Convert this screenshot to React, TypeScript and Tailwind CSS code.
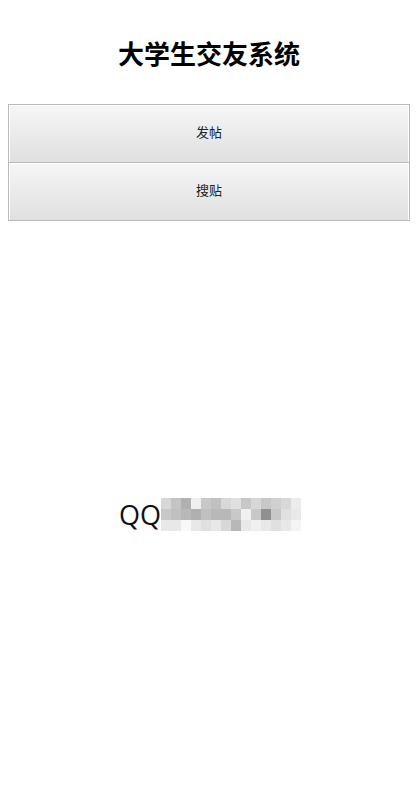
import React from "react";

const rows: string[][] = [
  ["#d8d8d8", "#c4c4c4", "#b0b0b0", "#efefef", "#c8c8c8", "#c0c0c0", "#d8d8d8", "#e0e0e0", "#c8c8c8", "#d8d8d8", "#c8c8c8", "#d0d0d0", "#d8d8d8", "#ececec"],
  ["#c8c8c8", "#c0c0c0", "#b8b8b8", "#b0b0b0", "#c0c0c0", "#b8b8b8", "#b8b8b8", "#c8c8c8", "#f0f0f0", "#c8c8c8", "#909090", "#c8c8c8", "#e0e0e0", "#e8e8e8"],
  ["#e8e8e8", "#e8e8e8", "#f8f8f8", "#e8e8e8", "#e0e0e0", "#e8e8e8", "#d8d8d8", "#b8b8b8", "#e8e8e8", "#f0f0f0", "#e8e8e8", "#e0e0e0", "#e8e8e8", "#f4f4f4"],
];

function Btn({ label }: { label: string }) {
  return (
    <button className="h-[59px] w-full border border-[#bbbbbb] bg-gradient-to-b from-[#f6f6f6] to-[#e0e0e0] pb-[3px] text-[13px] text-[#222] shadow-[inset_1px_1px_0_#ffffff,inset_-1px_0_0_#ffffff]">
      {label}
    </button>
  );
}

export default function App() {
  return (
    <div
      className="min-h-[798px] w-full bg-white"
      style={{ fontFamily: '"Noto Sans CJK SC", "Noto Sans", sans-serif' }}
    >
      <h1 className="pt-[33px] text-center text-[26px] font-bold leading-[40px] text-black">
        大学生交友系统
      </h1>
      <div className="mx-[8px] mt-[31px] flex flex-col">
        <Btn label="发帖" />
        <div className="-mt-px">
          <Btn label="搜贴" />
        </div>
      </div>
      <div className="mt-[277px] flex items-center justify-center pl-[2px]">
        <span
          className="text-[27px] font-normal leading-none text-[#111]"
          style={{ fontFamily: '"Open Sans", sans-serif' }}
        >
          QQ
        </span>
        <svg width="140" height="33" viewBox="0 0 140 33" className="block">
          {rows.map((r, ri) =>
            r.map((c, ci) => (
              <rect key={`${ri}-${ci}`} x={ci * 10} y={ri * 11} width="10" height="11" fill={c} />
            ))
          )}
        </svg>
      </div>
    </div>
  );
}
